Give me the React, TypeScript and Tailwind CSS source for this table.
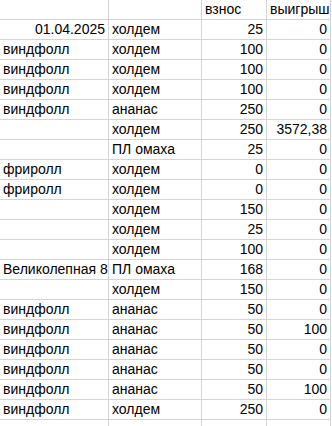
const header = ['', '', 'взнос', 'выигрыш']

type Row = [string, string, string, string]

const rows: Row[] = [
  ['01.04.2025', 'холдем', '25', '0'],
  ['виндфолл', 'холдем', '100', '0'],
  ['виндфолл', 'холдем', '100', '0'],
  ['виндфолл', 'холдем', '100', '0'],
  ['виндфолл', 'ананас', '250', '0'],
  ['', 'холдем', '250', '3572,38'],
  ['', 'ПЛ омаха', '25', '0'],
  ['фриролл', 'холдем', '0', '0'],
  ['фриролл', 'холдем', '0', '0'],
  ['', 'холдем', '150', '0'],
  ['', 'холдем', '25', '0'],
  ['', 'холдем', '100', '0'],
  ['Великолепная 8', 'ПЛ омаха', '168', '0'],
  ['', 'холдем', '150', '0'],
  ['виндфолл', 'ананас', '50', '0'],
  ['виндфолл', 'ананас', '50', '100'],
  ['виндфолл', 'ананас', '50', '0'],
  ['виндфолл', 'ананас', '50', '0'],
  ['виндфолл', 'ананас', '50', '100'],
  ['виндфолл', 'холдем', '250', '0'],
]

const widths = ['w-[109px]', 'w-[93px]', 'w-[65px]', 'w-[64px]']

function Cell({ text, col, right }: { text: string; col: number; right?: boolean }) {
  return (
    <div
      className={`${widths[col]} h-[20px] shrink-0 border-r border-b border-[#d4d4d4] flex items-end pb-[1px] whitespace-nowrap ${
        right ? 'justify-end pr-[3px]' : 'justify-start pl-[3px]'
      }`}
    >
      <span className="leading-[17px]">{text}</span>
    </div>
  )
}

const isNumber = (s: string) => /^[\d.,]+$/.test(s)

export default function App() {
  return (
    <div
      className="w-[332px] h-[426px] overflow-hidden bg-white text-black text-[14px]"
      style={{ fontFamily: '"Liberation Sans", Arial, sans-serif' }}
    >
      <div className="flex">
        {header.map((h, i) => (
          <Cell key={i} text={h} col={i} />
        ))}
      </div>
      {rows.map((r, ri) => (
        <div key={ri} className="flex">
          {r.map((c, ci) => (
            <Cell key={ci} text={c} col={ci} right={isNumber(c)} />
          ))}
        </div>
      ))}
      <div className="flex">
        {header.map((_, i) => (
          <Cell key={i} text="" col={i} />
        ))}
      </div>
    </div>
  )
}
